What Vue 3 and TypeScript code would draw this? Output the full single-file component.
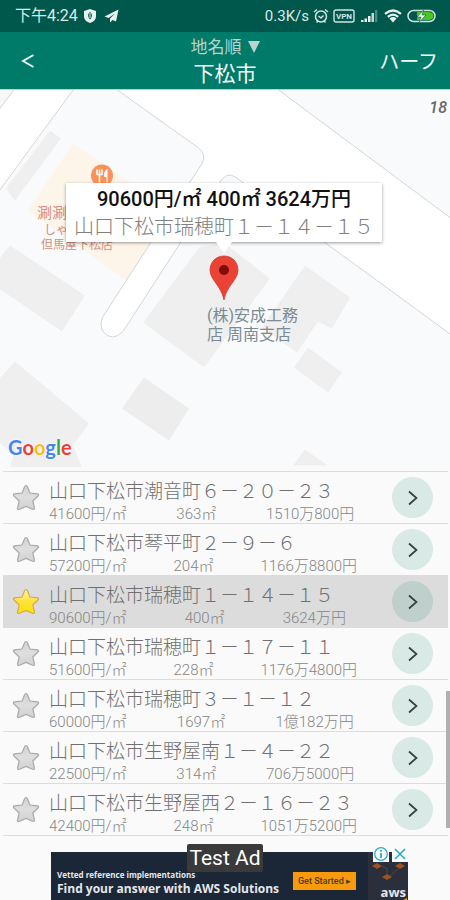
<script setup lang="ts">
import { ref } from 'vue'

interface Parcel {
  name: string
  unit: string
  area: string
  total: string
}

const parcels: Parcel[] = [
  { name: '山口下松市潮音町６－２０－２３', unit: '41600円/㎡', area: '363㎡', total: '1510万800円' },
  { name: '山口下松市琴平町２－９－６', unit: '57200円/㎡', area: '204㎡', total: '1166万8800円' },
  { name: '山口下松市瑞穂町１－１４－１５', unit: '90600円/㎡', area: '400㎡', total: '3624万円' },
  { name: '山口下松市瑞穂町１－１７－１１', unit: '51600円/㎡', area: '228㎡', total: '1176万4800円' },
  { name: '山口下松市瑞穂町３－１－１２', unit: '60000円/㎡', area: '1697㎡', total: '1億182万円' },
  { name: '山口下松市生野屋南１－４－２２', unit: '22500円/㎡', area: '314㎡', total: '706万5000円' },
  { name: '山口下松市生野屋西２－１６－２３', unit: '42400円/㎡', area: '248㎡', total: '1051万5200円' },
]

const selected = ref(2)
const sortOrder = ref('name')
</script>

<template>
  <div class="screen">
    <div class="status">
      <span class="clock">下午4:24</span>
      <svg class="shield" viewBox="0 0 14 16" width="14" height="16">
        <path d="M7 1 L13 3 V8 C13 12 10 14 7 15 C4 14 1 12 1 8 V3 Z" fill="#e8f1ef" />
        <path d="M7 4 C4.500 5.500 4.500 9 7 11.500 C9.500 9 9.500 5.500 7 4 Z" fill="#00574b" />
        <path d="M7 5 V10" stroke="#e8f1ef" stroke-width="1" />
      </svg>
      <svg class="plane" viewBox="0 0 15 14" width="15" height="14">
        <path d="M14.500 0.500 L0.500 7.500 L4.500 9 L11 4.500 L6 9.500 L6 13.500 L8.500 10.900 L12 12.500 Z" fill="#e8f1ef" />
      </svg>
      <span class="speed">0.3K/s</span>
      <svg viewBox="0 0 16 16" width="16" height="16" fill="none" stroke="#d5e4e1" stroke-width="1.500">
        <circle cx="8" cy="8.500" r="5.500" />
        <path d="M1 4 L4 1.500 M15 4 L12 1.500 M3.500 14.500 L5 13 M12.500 14.500 L11 13 M5.500 8 L8 10 L10.500 7.500" />
      </svg>
      <svg class="vpn" viewBox="0 0 22 14" width="22" height="14" fill="none" stroke="#d5e4e1">
        <rect x="1" y="1" width="20" height="12" rx="2" stroke-width="1.400" />
        <text x="11" y="10" text-anchor="middle" stroke="none" fill="#d5e4e1">VPN</text>
      </svg>
      <svg class="signal" viewBox="0 0 18 14" width="18" height="14">
        <path d="M1 11h2.500v2H1z M4.500 9.500H7V13H4.500z M8 7h2.500v6H8z" fill="#e8f1ef" />
        <path d="M11.500 4H14v9h-2.500z" fill="#c5d8d5" />
        <path d="M15 1h2.300v12H15z" fill="#4d8880" />
      </svg>
      <svg class="wifi" viewBox="0 0 18 14" width="18" height="14" fill="none" stroke="#e8f1ef" stroke-width="2.200">
        <path d="M1 4.800 Q9 -1.800 17 4.800 M3.800 7.800 Q9 3.400 14.200 7.800" />
        <path d="M5.500 9.500 Q9 6.700 12.500 9.500 L9 13.500 Z" fill="#e8f1ef" stroke="none" />
      </svg>
      <svg class="battery" viewBox="0 0 30 14" width="30" height="14">
        <rect x="1" y="1.500" width="27" height="11" rx="5.500" fill="none" stroke="#d5e4e1" stroke-width="1.500" />
        <path d="M10 3 H22 Q26.500 3.500 26.500 7 Q26.500 10.500 22 11 H10 Z" fill="#46c81e" />
        <path d="M16.500 1 L10 8 H14 L12 13.500 L19 6 H15 Z" fill="#fff" stroke="#00574b" stroke-width="0.600" />
      </svg>
    </div>

    <header class="toolbar">
      <button class="back" type="button" aria-label="戻る">
        <svg viewBox="0 0 14 16" width="14" height="16" fill="none" stroke="#e8f4f2" stroke-width="1.900">
          <path d="M12.500 2 L2 8 L12.500 14" />
        </svg>
      </button>
      <div class="titles">
        <label class="sort">
          <select v-model="sortOrder" aria-label="並び順">
            <option value="name">地名順</option>
          </select>
          <svg viewBox="0 0 12 12" width="12" height="12"><path d="M0 0H12L6 12Z" fill="#b9d3cf" /></svg>
        </label>
        <h1>下松市</h1>
      </div>
      <button class="half" type="button">ハーフ</button>
    </header>

    <section class="map">
      <svg class="tiles" viewBox="0 89 450 378" preserveAspectRatio="xMidYMid slice">
        <rect y="89" width="450" height="378" fill="#f8fafb" />
        <g fill="#efefef">
          <path d="M50 130 L61 138 L15 200 L6 188 Z" />
          <path d="M10 245 L85 295 L62 331 L-4 286 V262 Z" />
          <path d="M15 361 L89 423 L73 445 L82 467 H10 L14 454 L-4 440 V382 Z" />
          <path d="M144 377 L189 408 L169 440 L122 408 Z" fill="#ededed" />
          <path d="M225 243 L270 278 L204 367 L143 322 L200 246 Z" />
          <path d="M305 265 L350 297 L332 328 L318 321 L297 352 L262 327 Z" />
          <path d="M308 347 L342 372 L328 392 L294 367 Z" />
          <path d="M305 449 L328 465 H293 Z" />
        </g>
        <path d="M73 143 L150 195 L158 232 L128 281 L28 210 Z" fill="#fef5ea" />
        <path d="M-5 80 H21 L-5 114 Z" fill="#f8f6f8" />
        <g fill="#fff" stroke="#d4d5d6" stroke-width="1">
          <path d="M21 80 L-10 121 V203 L80 80 Z" />
          <path d="M104 80 L198 147 Q207 154 202 163 L103 316 Q99 324 103 331 Q112 342 123 331 L217 186 Q226 169 236 177 L470 348 V232 L266 80 Z" />
        </g>
        <circle cx="102" cy="175" r="11" fill="#fc9259" />
        <path d="M97 169 V174 M99.500 169 V174 M102 169 V174 M99.500 173 V182 M96.500 174 H102.500" stroke="#fff" stroke-width="1.500" />
        <path d="M107 182 V169 Q104 171 104.500 176 H107" fill="#fff" stroke="#fff" stroke-width="1" />
      </svg>

      <span class="zoom">18</span>
      <span class="poi eatery">涮涮</span>
      <span class="poi eatery-kind">しゃ</span>
      <span class="poi eatery-branch">但馬屋下松店</span>
      <span class="poi office">(株)安成工務<br />店 周南支店</span>

      <svg class="pin" viewBox="0 0 30 46" width="30" height="46">
        <path d="M15 1 C7 1 1 7 1 15 C1 25 12 30 15 45 C18 30 29 25 29 15 C29 7 23 1 15 1 Z" fill="#ea4335" stroke="#c5362b" stroke-width="0.700" />
        <circle cx="15" cy="15" r="5" fill="#7f0e0b" />
      </svg>

      <div class="bubble">
        <strong>90600円/㎡ 400㎡ 3624万円</strong>
        <span>山口下松市瑞穂町１－１４－１５</span>
      </div>

      <span class="google"><i class="b">G</i><i class="r">o</i><i class="y">o</i><i class="b">g</i><i class="g">l</i><i class="r">e</i></span>
    </section>

    <main class="list-wrap">
      <ul class="list">
        <li v-for="(p, i) in parcels" :key="p.name" :class="{ active: i === selected }" @click="selected = i">
          <button class="star" type="button" aria-label="お気に入り">
            <svg viewBox="0 0 28 27" width="28" height="27">
              <defs>
                <linearGradient :id="'fill' + i" x1="0" y1="0" x2="0" y2="1">
                  <stop offset="0" :stop-color="i === 2 ? '#fff8a0' : '#d4d4d4'" />
                  <stop offset="0.5" :stop-color="i === 2 ? '#ffe23a' : '#dedede'" />
                  <stop offset="1" :stop-color="i === 2 ? '#ffe600' : '#d2d2d2'" />
                </linearGradient>
              </defs>
              <path
                d="M14 1.500 Q15 1.500 15.500 3 L18 9 L25.500 9.800 Q27.500 10.500 26 12 L20.800 17 L22.500 24 Q22.500 26 20.500 25.300 L14 22.500 L7.500 25.300 Q5.500 26 5.500 24 L7.200 17 L2 12 Q0.500 10.500 2.500 9.800 L10 9 L12.500 3 Q13 1.500 14 1.500 Z"
                :fill="'url(#fill' + i + ')'"
                :stroke="i === 2 ? '#d9a35c' : '#a9a9a9'"
                stroke-width="1.200"
              />
            </svg>
          </button>
          <div class="text">
            <div class="name">{{ p.name }}</div>
            <div class="info">
              <span>{{ p.unit }}</span><span>{{ p.area }}</span><span>{{ p.total }}</span>
            </div>
          </div>
          <button class="go" type="button" aria-label="詳細">
            <svg viewBox="0 0 12 16" width="12" height="16" fill="none" stroke="#33403e" stroke-width="1.700">
              <path d="M2 1.500 L9.500 8 L2 14.500" />
            </svg>
          </button>
        </li>
      </ul>
      <div class="scrollbar"></div>
    </main>

    <footer class="ad">
      <div class="copy">
        <span class="lead">Vetted reference implementations</span>
        <span class="main">Find your answer with AWS Solutions</span>
      </div>
      <a class="cta" href="#">Get Started ▸</a>
      <div class="brand">
        <svg viewBox="0 0 40 48" preserveAspectRatio="xMaxYMin slice">
          <rect width="40" height="48" fill="#2b2f3c" />
          <path d="M4 14 L9 11 L14 14 L9 17 Z M14 25 L19 22 L24 25 L19 28 Z M27 14 L32 11 L37 14 L32 17 Z" fill="#9c5222" />
          <path d="M14 14 L19 17 V23 M30 17 L22 24" stroke="#684029" fill="none" />
          <path d="M35 48 L39 46 V48 Z" fill="#f90" />
        </svg>
        <span>aws</span>
      </div>
      <span class="test">Test Ad</span>
      <div class="choices">
        <button type="button" aria-label="広告情報">
          <svg viewBox="0 0 16 16" width="16" height="16" fill="none" stroke="#2ba9c9" stroke-width="1.300">
            <circle cx="8" cy="8" r="6.300" /><path d="M8 7 V12 M8 4 V5.700" stroke-width="1.800" />
          </svg>
        </button>
        <button type="button" aria-label="広告を閉じる">
          <svg viewBox="0 0 16 16" width="16" height="16" fill="none" stroke="#2ba9c9" stroke-width="1.600">
            <path d="M3 3 L13 13 M13 3 L3 13" />
          </svg>
        </button>
      </div>
    </footer>
  </div>
</template>

<style>
body {
  margin: 0;
  background: #fafafa;
}
</style>

<style scoped>
* {
  box-sizing: border-box;
}
.screen {
  display: flex;
  flex-direction: column;
  min-height: 100vh;
  overflow: hidden;
  background: #fafafa;
  font-family: Roboto, 'Noto Sans CJK JP', sans-serif;
}
svg {
  display: block;
  flex: none;
}
button,
select {
  appearance: none;
  margin: 0;
  padding: 0;
  border: 0;
  background: none;
  color: inherit;
  font: inherit;
}
.status {
  display: flex;
  align-items: center;
  height: 32px;
  padding: 0 13px 0 15px;
  background: #00574b;
  color: #dce9e7;
  line-height: 20px;
}
.clock {
  font-size: 16px;
}
.shield {
  margin-left: 5px;
}
.plane {
  margin-left: 7px;
}
.speed {
  margin-left: auto;
  margin-right: 4px;
  font-size: 15px;
}
.vpn {
  margin-left: 4px;
  font-size: 8px;
  font-weight: 700;
}
.signal {
  margin-left: 5px;
}
.wifi {
  margin-left: 6px;
}
.battery {
  margin-left: 5px;
}
.toolbar {
  display: grid;
  grid-template-columns: 1fr auto 1fr;
  align-items: center;
  height: 57px;
  padding: 0 12px 0 16px;
  background: #007b6a;
  color: #f2faf8;
}
.back {
  justify-self: start;
  width: 24px;
  height: 32px;
  padding-left: 5px;
}
.titles {
  display: flex;
  flex-direction: column;
  align-items: center;
  padding-right: 4px;
}
.sort {
  display: flex;
  align-items: center;
  gap: 6px;
  height: 26px;
  color: #b9d3cf;
}
.sort select {
  width: 51px;
  height: 24px;
  font-size: 17px;
  line-height: 24px;
}
.titles h1 {
  margin: 0;
  font-size: 21px;
  font-weight: 400;
  line-height: 28px;
}
.half {
  justify-self: end;
  font-size: 20px;
}
.map {
  position: relative;
  height: 378px;
  border-top: 1px solid #bcd3cf;
  overflow: hidden;
}
.tiles {
  width: 100%;
  height: 100%;
}
.zoom,
.poi,
.pin,
.bubble,
.google {
  position: absolute;
}
.zoom {
  top: 8px;
  right: 3px;
  color: #666;
  font-size: 16px;
  font-style: italic;
  font-weight: 500;
  line-height: 20px;
}
.poi {
  color: #d98b7c;
  font-size: 12px;
  line-height: 16px;
  white-space: nowrap;
}
.eatery {
  top: 115px;
  left: calc(50% - 188px);
  font-size: 15px;
}
.eatery-kind {
  top: 132px;
  left: calc(50% - 181px);
}
.eatery-branch {
  top: 147px;
  left: calc(50% - 184px);
}
.office {
  top: 216px;
  left: calc(50% - 18px);
  color: #7a8b93;
  font-size: 16px;
  line-height: 19px;
}
.pin {
  top: 165px;
  left: calc(50% - 16px);
}
.bubble {
  top: 93px;
  left: calc(50% - 1px);
  display: flex;
  flex-direction: column;
  align-items: center;
  padding: 2px 8px 1px;
  transform: translateX(-50%);
  background: #fff;
  box-shadow: 0 1px 3px #0006;
  font-size: 20px;
  line-height: 28px;
  white-space: nowrap;
}
.bubble::after {
  content: '';
  position: absolute;
  top: 100%;
  left: 50%;
  width: 16px;
  height: 11px;
  transform: translateX(-50%);
  background: #fff;
  clip-path: polygon(0 0, 100% 0, 50% 100%);
}
.bubble strong {
  color: #111;
  font-weight: 500;
}
.bubble span {
  color: #808080;
  font-weight: 300;
}
.google {
  bottom: 6px;
  left: 8px;
  font-family: Lato, sans-serif;
  font-size: 20px;
  font-weight: 700;
  line-height: 28px;
  text-shadow: 0 0 2px #fff, 0 0 2px #fff;
}
.google i {
  font-style: normal;
}
.b {
  color: #4285f4;
}
.r {
  color: #ea4335;
}
.y {
  color: #fbbc05;
}
.g {
  color: #34a853;
}
.list-wrap {
  position: relative;
  padding: 4px 2px 0 3px;
}
.list {
  margin: 0;
  padding: 0;
  border-bottom: 1px solid #dcdcdc;
  list-style: none;
}
.list li {
  display: flex;
  align-items: center;
  height: 52px;
  padding: 0 15px 0 9px;
  border-top: 1px solid #dcdcdc;
}
.list .active {
  background: #dcdcdc;
}
.star {
  width: 30px;
}
.text {
  flex: 1;
  min-width: 0;
  padding-top: 7px;
  padding-left: 7px;
  white-space: nowrap;
}
.name {
  color: #707070;
  font-size: 19px;
  font-weight: 300;
  line-height: 25px;
}
.info {
  display: flex;
  margin-right: -12px;
  color: #858585;
  font-size: 15px;
  font-weight: 300;
  line-height: 20px;
}
.info span {
  flex: 1 1 auto;
}
.go {
  display: grid;
  place-items: center;
  width: 41px;
  height: 41px;
  border-radius: 50%;
  background: #d9e9e5;
}
.active .go {
  background: #bfcfcb;
}
.scrollbar {
  position: absolute;
  right: 0;
  bottom: 8px;
  width: 4px;
  height: 137px;
  background: #b0b0b0;
}
.ad {
  position: relative;
  display: flex;
  align-items: center;
  align-self: center;
  width: 357px;
  height: 48px;
  margin: auto 0 0 9px;
  padding-left: 6px;
  background: #1b2737;
  color: #e4e7eb;
}
.copy {
  display: flex;
  flex-direction: column;
  width: 236px;
  padding-top: 13px;
  font-family: 'Open Sans', sans-serif;
  font-weight: 700;
  white-space: nowrap;
}
.lead {
  font-size: 8px;
  line-height: 13px;
}
.main {
  font-size: 12px;
  line-height: 16px;
}
.cta {
  width: 63px;
  height: 18px;
  margin-top: 10px;
  background: #f79a0b;
  color: #4b3a1e;
  font-size: 9px;
  font-weight: 500;
  line-height: 18px;
  text-align: center;
  text-decoration: none;
}
.brand {
  position: relative;
  width: 40px;
  height: 48px;
  margin-left: auto;
}
.brand svg {
  width: 100%;
  height: 100%;
}
.brand span {
  position: absolute;
  right: 2px;
  bottom: 0;
  font-family: 'Open Sans', sans-serif;
  font-size: 13px;
  font-weight: 700;
  line-height: 16px;
}
.test {
  position: absolute;
  top: -8px;
  left: 136px;
  width: 76px;
  height: 28px;
  border-radius: 2px;
  background: #3a3a3a;
  color: #fff;
  font-size: 21px;
  line-height: 29px;
  text-align: center;
}
.choices {
  position: absolute;
  top: -6px;
  right: 0;
  display: flex;
  gap: 3px;
}
.choices button {
  background: #fafafa;
}
</style>
